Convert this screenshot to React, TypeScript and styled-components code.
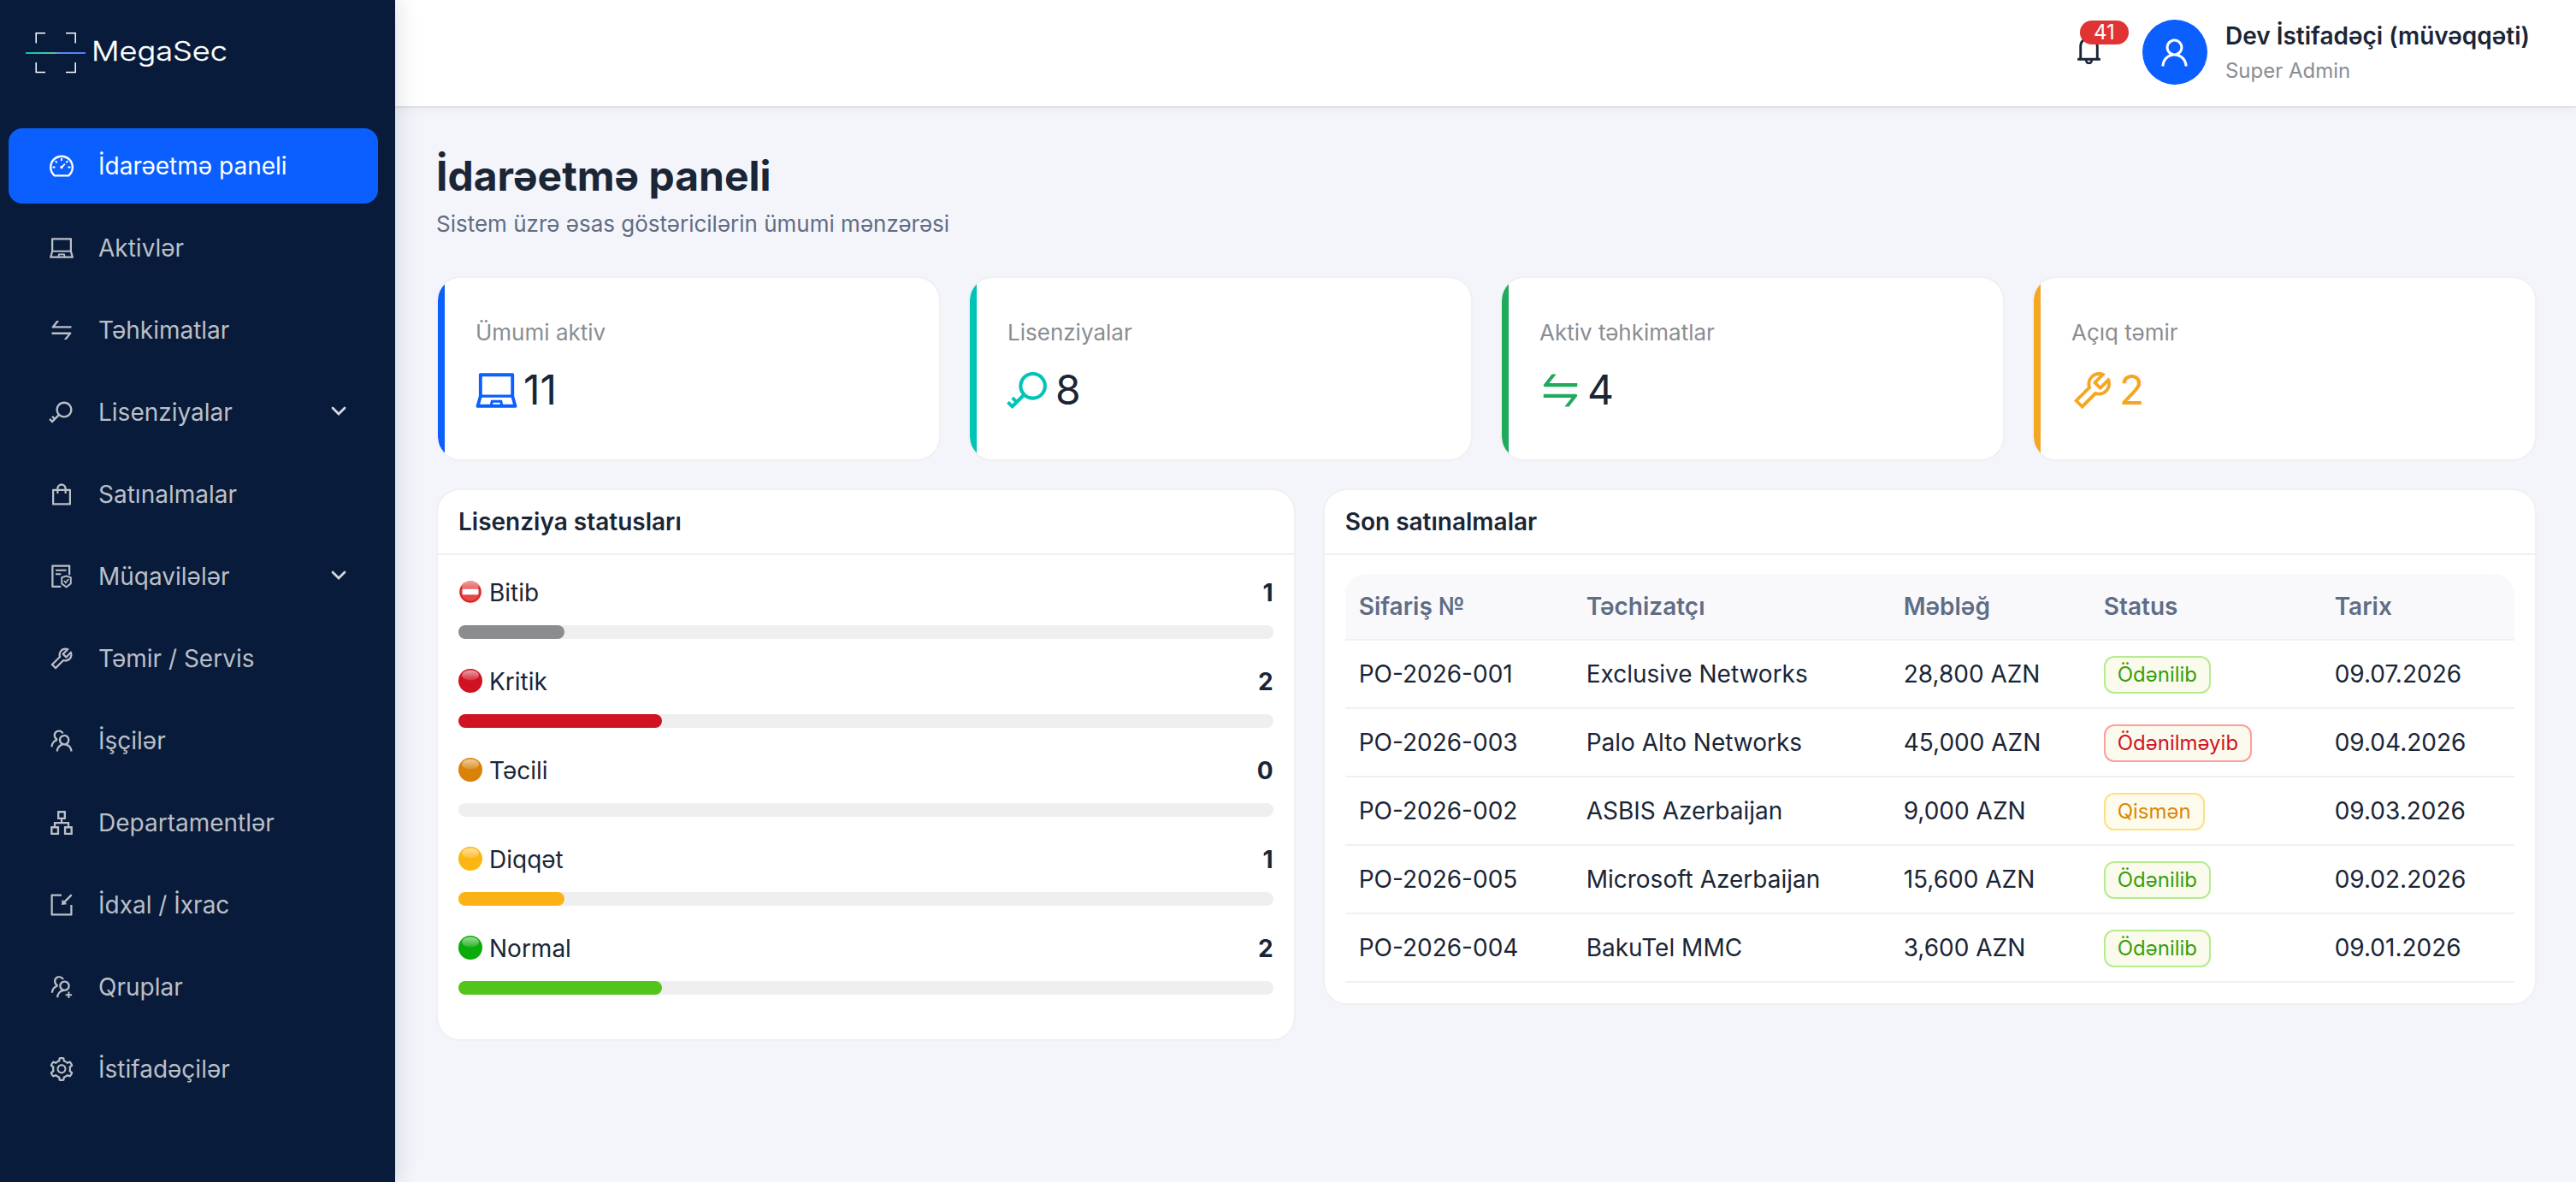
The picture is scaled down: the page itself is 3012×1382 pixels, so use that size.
import { ReactNode } from "react";
import styled, { createGlobalStyle } from "styled-components";
import {
  AiOutlineApartment,
  AiOutlineBell,
  AiOutlineDashboard,
  AiOutlineFileProtect,
  AiOutlineImport,
  AiOutlineKey,
  AiOutlineLaptop,
  AiOutlineSetting,
  AiOutlineShopping,
  AiOutlineSwap,
  AiOutlineTeam,
  AiOutlineTool,
  AiOutlineUser,
  AiOutlineUsergroupAdd,
} from "react-icons/ai";

const menuItems = [
  { label: "İdarəetmə paneli", icon: <AiOutlineDashboard />, active: true },
  { label: "Aktivlər", icon: <AiOutlineLaptop /> },
  { label: "Təhkimatlar", icon: <AiOutlineSwap /> },
  { label: "Lisenziyalar", icon: <AiOutlineKey />, nested: true },
  { label: "Satınalmalar", icon: <AiOutlineShopping /> },
  { label: "Müqavilələr", icon: <AiOutlineFileProtect />, nested: true },
  { label: "Təmir / Servis", icon: <AiOutlineTool /> },
  { label: "İşçilər", icon: <AiOutlineTeam /> },
  { label: "Departamentlər", icon: <AiOutlineApartment /> },
  { label: "İdxal / İxrac", icon: <AiOutlineImport /> },
  { label: "Qruplar", icon: <AiOutlineUsergroupAdd /> },
  { label: "İstifadəçilər", icon: <AiOutlineSetting /> },
];

const stats = [
  { label: "Ümumi aktiv", value: 11, icon: <AiOutlineLaptop />, color: "#0b5fff" },
  { label: "Lisenziyalar", value: 8, icon: <AiOutlineKey />, color: "#00c4b8" },
  { label: "Aktiv təhkimatlar", value: 4, icon: <AiOutlineSwap />, color: "#1fab5b" },
  { label: "Açıq təmir", value: 2, icon: <AiOutlineTool />, color: "#f5a623", valueColor: "#f5a623" },
];

const statuses = [
  { id: "expired", label: "Bitib", count: 1, percent: 13, color: "#8a8c8e", dot: "#dc2626" },
  { id: "critical", label: "Kritik", count: 2, percent: 25, color: "#cf1322", dot: "#cf1322" },
  { id: "urgent", label: "Təcili", count: 0, percent: 0, color: "#d98208", dot: "#d98208" },
  { id: "warning", label: "Diqqət", count: 1, percent: 13, color: "#fbb216", dot: "#fbb612" },
  { id: "normal", label: "Normal", count: 2, percent: 25, color: "#52c41a", dot: "#0aab0a" },
];

type Tone = "green" | "red" | "gold";

const orders: { no: string; vendor: string; amount: string; status: string; tone: Tone; date: string }[] = [
  { no: "PO-2026-001", vendor: "Exclusive Networks", amount: "28,800 AZN", status: "Ödənilib", tone: "green", date: "09.07.2026" },
  { no: "PO-2026-003", vendor: "Palo Alto Networks", amount: "45,000 AZN", status: "Ödənilməyib", tone: "red", date: "09.04.2026" },
  { no: "PO-2026-002", vendor: "ASBIS Azerbaijan", amount: "9,000 AZN", status: "Qismən", tone: "gold", date: "09.03.2026" },
  { no: "PO-2026-005", vendor: "Microsoft Azerbaijan", amount: "15,600 AZN", status: "Ödənilib", tone: "green", date: "09.02.2026" },
  { no: "PO-2026-004", vendor: "BakuTel MMC", amount: "3,600 AZN", status: "Ödənilib", tone: "green", date: "09.01.2026" },
];

const tones = {
  green: { text: "#389e0d", border: "#b7eb8f", bg: "#fafbec" },
  red: { text: "#cf1322", border: "#fb9f98", bg: "#fbfaee" },
  gold: { text: "#de8604", border: "#ffdf85", bg: "#fcfbec" },
};

const Logo = () => (
  <svg width="240" height="62" viewBox="0 0 240 62">
    <defs>
      <linearGradient id="scan" x1="0" x2="1" y1="0" y2="0">
        <stop offset="0" stopColor="#00c4b8" />
        <stop offset="0.45" stopColor="#55c79a" />
        <stop offset="0.55" stopColor="#5b8cf5" />
        <stop offset="1" stopColor="#4d7dff" />
      </linearGradient>
    </defs>
    <path
      d="M12.2 20.5V8.7H23M47 8.7h11.2v11.8M58.2 43v11.5H47M23 54.5H12.2V43"
      fill="none"
      stroke="#fff"
      strokeWidth="1.5"
    />
    <rect x="0" y="31" width="70" height="2" fill="url(#scan)" />
    <text
      x="77"
      y="41.3"
      fill="#fff"
      stroke="#fff"
      strokeWidth="0.3"
      fontFamily="Inter"
      fontSize="31"
      fontWeight="300"
      textLength="159"
      lengthAdjust="spacingAndGlyphs"
    >
      MegaSec
    </text>
  </svg>
);

const Chevron = () => (
  <svg width="18" height="12" viewBox="0 0 18 12">
    <path d="M2 2l7 7 7-7" fill="none" stroke="currentColor" strokeWidth="2.8" strokeLinecap="round" />
  </svg>
);

const StatusDot = ({ id, color }: { id: string; color: string }) => (
  <svg width="28" height="28" viewBox="0 0 28 28">
    <defs>
      <linearGradient id={`gloss-${id}`} x1="0" x2="0" y1="0" y2="1">
        <stop offset="0" stopColor="#fff" stopOpacity="0.6" />
        <stop offset="1" stopColor="#fff" stopOpacity="0.12" />
      </linearGradient>
    </defs>
    <circle cx="14" cy="14" r={id === "expired" ? 12.8 : 14} fill={color} />
    <ellipse cx="14" cy="7.4" rx="10" ry="6" fill={`url(#gloss-${id})`} />
    {id === "expired" && (
      <>
        <circle cx="14" cy="14" r="10.6" fill="#f08078" fillOpacity="0.4" />
        <rect x="4.6" y="10.8" width="18.8" height="6.4" rx="0.8" fill="#fff" />
      </>
    )}
  </svg>
);

const Panel = ({ title, children }: { title: string; children: ReactNode }) => (
  <PanelBox>
    <PanelHead>{title}</PanelHead>
    <PanelBody>{children}</PanelBody>
  </PanelBox>
);

const LicenseStatuses = () => (
  <Panel title="Lisenziya statusları">
    {statuses.map((item) => (
      <StatusRow key={item.id}>
        <StatusTitle>
          <StatusDot id={item.id} color={item.dot} />
          <span>{item.label}</span>
          <strong>{item.count}</strong>
        </StatusTitle>
        <Rail>
          <Fill $color={item.color} style={{ width: `${item.percent}%` }} />
        </Rail>
      </StatusRow>
    ))}
  </Panel>
);

const RecentOrders = () => (
  <Panel title="Son satınalmalar">
    <OrdersTable>
      <colgroup>
        <col width="266" />
        <col width="371" />
        <col width="234" />
        <col width="270" />
        <col />
      </colgroup>
      <thead>
        <tr>
          <th>Sifariş №</th>
          <th>Təchizatçı</th>
          <th>Məbləğ</th>
          <th>Status</th>
          <th>Tarix</th>
        </tr>
      </thead>
      <tbody>
        {orders.map((order) => (
          <tr key={order.no}>
            <td>{order.no}</td>
            <td>{order.vendor}</td>
            <td>{order.amount}</td>
            <td>
              <Tag $tone={order.tone}>{order.status}</Tag>
            </td>
            <td>{order.date}</td>
          </tr>
        ))}
      </tbody>
    </OrdersTable>
  </Panel>
);

export default function App() {
  return (
    <>
      <GlobalStyle />
      <Layout>
        <Sidebar>
          <LogoBox>
            <Logo />
          </LogoBox>
          <Menu>
            {menuItems.map((item) => (
              <MenuItem key={item.label} $active={item.active}>
                {item.icon}
                <span>{item.label}</span>
                {item.nested && <Chevron />}
              </MenuItem>
            ))}
          </Menu>
        </Sidebar>
        <Main>
          <Header>
            <BellBox>
              <AiOutlineBell />
              <Badge>41</Badge>
            </BellBox>
            <Avatar>
              <AiOutlineUser />
            </Avatar>
            <UserInfo>
              <strong>Dev İstifadəçi (müvəqqəti)</strong>
              <span>Super Admin</span>
            </UserInfo>
          </Header>
          <Content>
            <PageTitle>İdarəetmə paneli</PageTitle>
            <PageSubtitle>Sistem üzrə əsas göstəricilərin ümumi mənzərəsi</PageSubtitle>
            <StatGrid>
              {stats.map((stat) => (
                <StatCard key={stat.label} $color={stat.color}>
                  <StatLabel>{stat.label}</StatLabel>
                  <StatValue $icon={stat.color} $color={stat.valueColor}>
                    {stat.icon}
                    <span>{stat.value}</span>
                  </StatValue>
                </StatCard>
              ))}
            </StatGrid>
            <PanelGrid>
              <LicenseStatuses />
              <RecentOrders />
            </PanelGrid>
          </Content>
        </Main>
      </Layout>
    </>
  );
}

const GlobalStyle = createGlobalStyle`
  * {
    box-sizing: border-box;
  }

  body {
    margin: 0;
    background-color: #f4f5fb;
    color: #1a2536;
    font-family: Inter, "Liberation Sans", sans-serif;
    font-size: 28px;
    line-height: 44px;
  }

  svg {
    display: block;
    flex-shrink: 0;
  }
`;

const Layout = styled.div`
  display: flex;
  width: 3012px;
  height: 1382px;
  overflow: hidden;
`;

const Sidebar = styled.aside`
  z-index: 2;
  flex: 0 0 462px;
  background-color: #081b3a;
  box-shadow: 4px 0 24px rgba(8, 27, 58, 0.12);
`;

const LogoBox = styled.div`
  height: 150px;
  padding: 30px 0 0 30px;
`;

const Menu = styled.nav`
  display: flex;
  flex-direction: column;
  gap: 8px;
  padding: 0 20px 0 10px;
`;

const MenuItem = styled.a<{ $active?: boolean }>`
  display: flex;
  align-items: center;
  height: 88px;
  padding: 0 37px 0 46px;
  border-radius: 16px;
  background-color: ${({ $active }) => ($active ? "#0b5fff" : "transparent")};
  color: ${({ $active }) => ($active ? "#fff" : "#bbbfc7")};

  > svg:first-child {
    width: 32px;
    height: 32px;
  }

  > span {
    flex: 1;
    margin-left: 27px;
  }

  > svg:last-child {
    margin-top: -3px;
    color: #d5d9e0;
  }
`;

const Main = styled.main`
  flex: 1;
  min-width: 0;
`;

const Header = styled.header`
  display: flex;
  align-items: center;
  justify-content: flex-end;
  height: 124px;
  padding: 0 54px 2px 0;
  background-color: #fff;
  box-shadow: 0 2px 1px rgba(8, 27, 58, 0.05), 0 2px 16px rgba(8, 27, 58, 0.06);
`;

const BellBox = styled.div`
  position: relative;
  margin: 0 42px 7px 0;

  svg {
    width: 41px;
    height: 41px;
  }
`;

const Badge = styled.span`
  position: absolute;
  top: -13px;
  left: 10px;
  padding: 0 16px;
  border-radius: 14px;
  background-color: #e03434;
  color: #fff;
  font-size: 24px;
  line-height: 28px;
`;

const Avatar = styled.div`
  display: flex;
  align-items: center;
  justify-content: center;
  width: 76px;
  height: 76px;
  border-radius: 50%;
  background-color: #0b5fff;
  color: #fff;

  svg {
    width: 41px;
    height: 41px;
  }
`;

const UserInfo = styled.div`
  display: flex;
  flex-direction: column;
  margin-left: 21px;

  strong {
    font-weight: 600;
    line-height: 42px;
  }

  span {
    padding-top: 1px;
    color: #8a8d92;
    font-size: 24px;
    line-height: 38px;
  }
`;

const Content = styled.div`
  padding: 48px 46px 48px 48px;
`;

const PageTitle = styled.h1`
  margin: 0;
  font-size: 48px;
  font-weight: 700;
  line-height: 67px;
`;

const PageSubtitle = styled.p`
  margin: 0 0 39px;
  color: #5f6d85;
  font-size: 26px;
  line-height: 45px;
`;

const StatGrid = styled.div`
  display: grid;
  grid-template-columns: repeat(4, 1fr);
  gap: 32px;
`;

const StatCard = styled.section<{ $color: string }>`
  height: 216px;
  padding: 43px 44px;
  border: 2px solid #f0f0f2;
  border-radius: 28px;
  background: linear-gradient(to right, ${({ $color }) => $color} 8px, #fff 8px) padding-box;
`;

const StatLabel = styled.div`
  color: #8a8d92;
  font-size: 26px;
  line-height: 42px;
`;

const StatValue = styled.div<{ $icon: string; $color?: string }>`
  display: flex;
  align-items: center;
  gap: 4px;
  margin: 8px 0 0 -3px;
  color: ${({ $color }) => $color ?? "#1a2536"};
  font-size: 48px;
  line-height: 76px;

  svg {
    width: 55px;
    height: 55px;
    color: ${({ $icon }) => $icon};
  }
`;

const PanelGrid = styled.div`
  display: grid;
  grid-template-columns: 1004.7fr 1419.3fr;
  align-items: start;
  gap: 32px;
  margin-top: 32px;
`;

const PanelBox = styled.section`
  border: 2px solid #f0f0f2;
  border-radius: 28px;
  background-color: #fff;
`;

const PanelHead = styled.h2`
  height: 76px;
  margin: 0 0 -2px;
  padding: 0 24px;
  border-bottom: 2px solid #f0f0f0;
  font-size: 28px;
  font-weight: 600;
  line-height: 74px;
`;

const PanelBody = styled.div`
  padding: 24px;
`;

const StatusRow = styled.div`
  margin-bottom: 28px;
`;

const StatusTitle = styled.div`
  display: flex;
  align-items: center;

  > svg {
    margin-top: -2px;
  }

  > span {
    flex: 1;
    margin-left: 8px;
  }

  > strong {
    font-weight: 700;
  }
`;

const Rail = styled.div`
  height: 16px;
  margin-top: 16px;
  border-radius: 8px;
  background-color: #efefef;
`;

const Fill = styled.div<{ $color: string }>`
  height: 100%;
  border-radius: 8px;
  background-color: ${({ $color }) => $color};
`;

const OrdersTable = styled.table`
  width: 100%;
  border-collapse: separate;
  border-spacing: 0;
  table-layout: fixed;

  th,
  td {
    padding: 0 16px;
    border-bottom: 2px solid #f0f0f0;
    text-align: left;
    white-space: nowrap;
  }

  th {
    height: 78px;
    background-color: #f9f9fc;
    color: #5f6d85;
    font-weight: 600;
  }

  th:first-child {
    border-top-left-radius: 24px;
  }

  th:last-child {
    border-top-right-radius: 24px;
  }

  td {
    height: 80px;
  }
`;

const Tag = styled.span<{ $tone: Tone }>`
  display: inline-block;
  padding: 0 14px;
  border: 2px solid ${({ $tone }) => tones[$tone].border};
  border-radius: 12px;
  background-color: ${({ $tone }) => tones[$tone].bg};
  color: ${({ $tone }) => tones[$tone].text};
  font-size: 24px;
  line-height: 40px;
  vertical-align: middle;
`;
